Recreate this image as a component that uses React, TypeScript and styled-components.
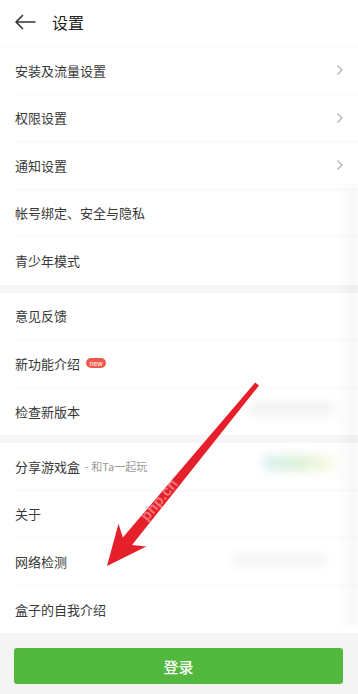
import React from "react";
import styled, { createGlobalStyle } from "styled-components";

type Item = {
  label: string;
  sub?: string;
  badge?: boolean;
  arrow?: boolean;
};

const sections: Item[][] = [
  [
    { label: "安装及流量设置", arrow: true },
    { label: "权限设置", arrow: true },
    { label: "通知设置", arrow: true },
    { label: "帐号绑定、安全与隐私" },
    { label: "青少年模式" },
  ],
  [{ label: "意见反馈" }, { label: "新功能介绍", badge: true }, { label: "检查新版本" }],
  [
    { label: "分享游戏盒", sub: "- 和Ta一起玩" },
    { label: "关于" },
    { label: "网络检测" },
    { label: "盒子的自我介绍" },
  ],
];

const GlobalStyle = createGlobalStyle`
  body {
    margin: 0;
    background: #ffffff;
    font-family: "Noto Sans CJK SC", "Noto Sans", sans-serif;
  }
  * {
    box-sizing: border-box;
  }
`;

const Chevron = () => (
  <svg width="8" height="12" viewBox="0 0 8 12">
    <path d="M1.5 1.5 L6 6 L1.5 10.5" fill="none" stroke="#a8a8a8" strokeWidth="1.1" />
  </svg>
);

const BackArrow = () => (
  <svg width="22" height="16" viewBox="0 0 22 16">
    <path d="M21 8 H2 M8.5 1.5 L2 8 L8.5 14.5" fill="none" stroke="#333" strokeWidth="1.6" strokeLinecap="round" strokeLinejoin="round" />
  </svg>
);

const App = () => {
  return (
    <Page>
      <GlobalStyle />
      <Header>
        <BackArrow />
        <Title>设置</Title>
      </Header>
      {sections.map((items, i) => (
        <React.Fragment key={i}>
          {i > 0 && <Gap />}
          <Section>
            {items.map((item, j) => (
              <Row key={item.label} $last={j === items.length - 1}>
                <Label>
                  {item.label}
                  {item.sub && <Sub>{item.sub}</Sub>}
                  {item.badge && <Badge>new</Badge>}
                </Label>
                {item.arrow && <Chevron />}
              </Row>
            ))}
          </Section>
        </React.Fragment>
      ))}
      <Footer>
        <LoginButton>登录</LoginButton>
      </Footer>

      <Shade />
      <Blob $top={402} $left={248} $width={86} $height={14} $bg="rgba(0,0,0,0.05)" />
      <Blob
        $top={455}
        $left={262}
        $width={72}
        $height={16}
        $bg="linear-gradient(to right, rgba(120,190,230,0.25), rgba(140,210,120,0.3), rgba(240,230,140,0.25))"
      />
      <Blob $top={553} $left={232} $width={94} $height={14} $bg="rgba(0,0,0,0.045)" />

      <Annotation width="358" height="694" viewBox="0 0 358 694">
        <polygon
          points="107,566 146.3,546.6 132,545.1 259,385.6 255.2,382.4 122.8,537.5 118.5,523.8"
          fill="#e5202b"
        />
        <text
          x="0"
          y="0"
          transform="translate(163 503) rotate(-50.5)"
          fill="rgba(255,175,175,0.6)"
          fontSize="15"
          fontWeight="700"
          fontFamily="'Liberation Sans', sans-serif"
          textAnchor="middle"
        >
          php.cn
        </text>
      </Annotation>
    </Page>
  );
};

const Page = styled.div`
  position: relative;
  display: flex;
  flex-direction: column;
  width: 358px;
  min-height: 694px;
  background: #ffffff;
  overflow: hidden;
`;

const Header = styled.div`
  display: flex;
  align-items: center;
  gap: 16px;
  height: 47px;
  padding: 0 14px 2px 14px;
  border-bottom: 1px solid #f7f7f7;
`;

const Title = styled.div`
  font-size: 16px;
  color: #222222;
`;

const Section = styled.div`
  display: flex;
  flex-direction: column;
  padding-left: 15px;
`;

const Row = styled.div<{ $last: boolean }>`
  display: flex;
  align-items: center;
  justify-content: space-between;
  height: 47.5px;
  padding-right: 14px;
  border-bottom: ${(p) => (p.$last ? "none" : "1px solid #f8f8f8")};
`;

const Label = styled.div`
  display: flex;
  align-items: center;
  font-size: 13px;
  color: #383838;
`;

const Sub = styled.span`
  margin-left: 5px;
  font-size: 11px;
  color: #9a9a9a;
`;

const Badge = styled.span`
  display: inline-flex;
  align-items: center;
  justify-content: center;
  margin-left: 6px;
  width: 20px;
  height: 10px;
  border-radius: 5px;
  background: #f05a4d;
  color: #ffffff;
  font-size: 7px;
  font-family: "Liberation Sans", sans-serif;
  line-height: 1;
`;

const Gap = styled.div`
  height: 8px;
  background: #f6f6f6;
`;

const Footer = styled.div`
  flex: 1;
  background: #f4f4f4;
  padding: 15px 15px 0 14px;
`;

const LoginButton = styled.button`
  width: 100%;
  height: 36px;
  border: none;
  border-radius: 3px;
  background: #52b83e;
  color: #ffffff;
  font-family: "Noto Sans CJK SC", sans-serif;
  font-size: 15px;
  font-weight: 500;
`;

const Shade = styled.div`
  position: absolute;
  top: 186px;
  right: 0;
  width: 24px;
  height: 440px;
  background: linear-gradient(to right, rgba(0, 0, 0, 0), rgba(0, 0, 0, 0.035));
  filter: blur(3px);
  pointer-events: none;
`;

const Blob = styled.div<{ $top: number; $left: number; $width: number; $height: number; $bg: string }>`
  position: absolute;
  top: ${(p) => p.$top}px;
  left: ${(p) => p.$left}px;
  width: ${(p) => p.$width}px;
  height: ${(p) => p.$height}px;
  background: ${(p) => p.$bg};
  border-radius: 8px;
  filter: blur(5px);
  pointer-events: none;
`;

const Annotation = styled.svg`
  position: absolute;
  top: 0;
  left: 0;
  pointer-events: none;
`;

export default App;
